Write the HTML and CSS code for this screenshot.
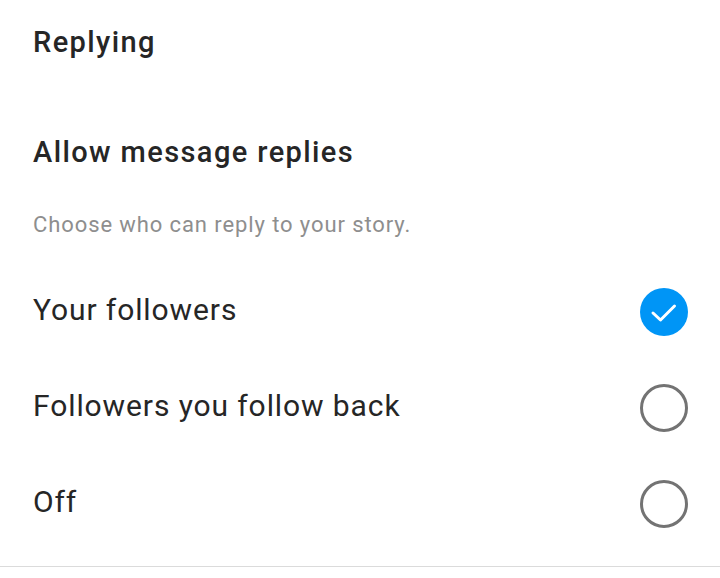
FILE: index.html
```html
<!DOCTYPE html>
<html lang="en">

<head>
  <meta charset="UTF-8">
  <meta name="viewport" content="width=device-width, initial-scale=1.0">
  <title>Replying</title>
  <link rel="stylesheet" href="styles.css">
</head>

<body>

  <div class="settings">
    <div class="page-title">Replying</div>

    <div class="section">
      <div class="section-title">Allow message replies</div>
      <div class="section-desc">Choose who can reply to your story.</div>

      <div class="option-list">
        <div class="option">
          <span class="option-label">Your followers</span>
          <span class="radio checked">
            <svg viewBox="0 0 48 48" width="48" height="48">
              <circle cx="24" cy="24" r="24" fill="#0095f6" />
              <path d="M13 25 L20.5 32 L34.5 18" fill="none" stroke="#fff" stroke-width="3" stroke-linecap="round" stroke-linejoin="round" />
            </svg>
          </span>
        </div>
        <div class="option">
          <span class="option-label">Followers you follow back</span>
          <span class="radio"></span>
        </div>
        <div class="option">
          <span class="option-label">Off</span>
          <span class="radio"></span>
        </div>
      </div>
    </div>

    <div class="divider"></div>
  </div>

</body>

</html>
```

FILE: styles.css
```css
* {
  box-sizing: border-box;
}

body {
  margin: 0;
  padding: 0;
  background-color: #fff;
  color: #262626;
  font-family: Roboto, "Noto Sans", sans-serif;
}

.settings {
  width: 720px;
  padding-top: 24px;
}

.settings .page-title {
  padding: 0 33px;
  font-size: 29px;
  font-weight: 500;
  line-height: 36px;
  letter-spacing: 1.4px;
}

.settings .section {
  margin-top: 74px;
  padding: 0 32px 0 33px;
}

.settings .section-title {
  font-size: 29px;
  font-weight: 500;
  line-height: 36px;
  letter-spacing: 1.4px;
}

.settings .section-desc {
  margin-top: 40px;
  font-size: 22px;
  line-height: 30px;
  letter-spacing: 0.9px;
  color: #8e8e8e;
}

.settings .option-list {
  margin-top: 24px;
}

.settings .option {
  height: 96px;
  display: flex;
  justify-content: space-between;
  align-items: center;
}

.settings .option-label {
  font-size: 30px;
  line-height: 36px;
  letter-spacing: 0.9px;
  padding-bottom: 4px;
}

.settings .radio {
  width: 48px;
  height: 48px;
  border: 3px solid #737373;
  border-radius: 50%;
}

.settings .radio.checked {
  border: none;
}

.settings .radio svg {
  display: block;
}

.settings .divider {
  margin-top: 14px;
  height: 1px;
  background-color: #dbdbdb;
}
```
